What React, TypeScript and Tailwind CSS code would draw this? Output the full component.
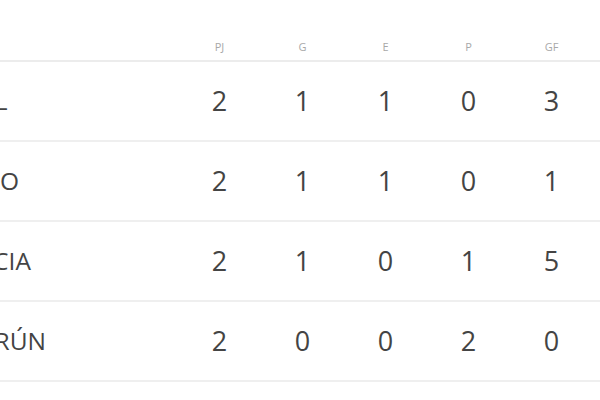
const cols = ['PJ', 'G', 'E', 'P', 'GF', 'GC']

const rows = [
  { team: 'BRASIL', stats: [2, 1, 1, 0, 3, 1] },
  { team: 'MÉXICO', stats: [2, 1, 1, 0, 1, 0] },
  { team: 'CROACIA', stats: [2, 1, 0, 1, 5, 3] },
  { team: 'CAMERÚN', stats: [2, 0, 0, 2, 0, 5] },
]

export default function App() {
  return (
    <div className="w-[600px] h-[400px] overflow-hidden bg-white font-['Open_Sans',sans-serif]">
      <div className="ml-[-100px] w-[800px]">
        {/* header */}
        <div className="flex items-end h-[62px] pb-[5px] border-b-2 border-[#ececec]">
          <div className="w-[278px] shrink-0" />
          {cols.map((c) => (
            <div key={c} className="w-[83px] shrink-0 text-center text-[11px] text-[#a8a8a8]">
              {c}
            </div>
          ))}
        </div>

        {rows.map((r) => (
          <div key={r.team} className="flex items-center h-[80px] border-b-2 border-[#efefef]">
            <div className="w-[278px] shrink-0 pl-[28px] text-[24.5px] text-[#444444] whitespace-nowrap">{r.team}</div>
            {r.stats.map((s, i) => (
              <div key={i} className="w-[83px] shrink-0 text-center text-[27px] text-[#444444]">
                {s}
              </div>
            ))}
          </div>
        ))}
      </div>
    </div>
  )
}
